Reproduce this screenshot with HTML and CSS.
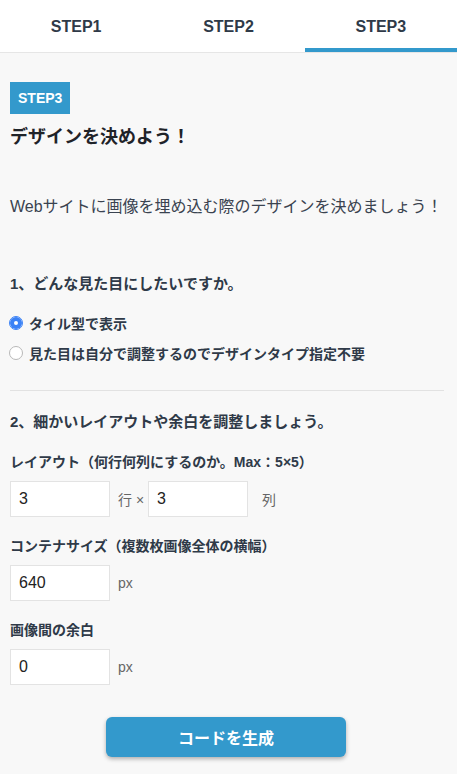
FILE: index.html
```html
<!DOCTYPE html>
<html lang="ja">
<head>
    <meta charset="utf-8">
    <title>画像埋め込みコード生成</title>
    <link rel="stylesheet" href="styles.css">
</head>
<body>
    <div class="tabs">
        <div class="tab">STEP1</div>
        <div class="tab">STEP2</div>
        <div class="tab active">STEP3</div>
    </div>

    <div class="content">
        <span class="badge">STEP3</span>
        <h1 class="title">デザインを決めよう！</h1>
        <p class="lead">Webサイトに画像を埋め込む際のデザインを決めましょう！</p>

        <h2 class="question q1">1、どんな見た目にしたいですか。</h2>
        <label class="radio first">
            <input type="radio" name="design" checked>
            <span>タイル型で表示</span>
        </label>
        <label class="radio">
            <input type="radio" name="design">
            <span>見た目は自分で調整するのでデザインタイプ指定不要</span>
        </label>

        <hr class="divider">

        <h2 class="question q2">2、細かいレイアウトや余白を調整しましょう。</h2>

        <div class="field">
            <div class="field-label">レイアウト（何行何列にするのか。Max：5×5）</div>
            <div class="field-row">
                <input type="text" class="num" value="3">
                <span class="unit">行 ×</span>
                <input type="text" class="num" value="3">
                <span class="unit wide">列</span>
            </div>
        </div>

        <div class="field">
            <div class="field-label">コンテナサイズ（複数枚画像全体の横幅）</div>
            <div class="field-row">
                <input type="text" class="num" value="640">
                <span class="unit">px</span>
            </div>
        </div>

        <div class="field">
            <div class="field-label">画像間の余白</div>
            <div class="field-row">
                <input type="text" class="num" value="0">
                <span class="unit">px</span>
            </div>
        </div>

        <div class="actions">
            <button class="generate">コードを生成</button>
        </div>
    </div>
</body>
</html>
```

FILE: styles.css
```css
body {
    margin: 0;
    background-color: #f8f8f8;
    font-family: "Liberation Sans", "Noto Sans CJK JP", sans-serif;
    color: #2f3a48;
}

.tabs {
    display: flex;
    background-color: #fff;
    border-bottom: 1px solid #e6e6e6;
}

.tab {
    flex: 1;
    height: 52px;
    line-height: 53px;
    text-align: center;
    font-size: 16px;
    font-weight: bold;
    color: #2f3a48;
}

.tab.active {
    box-shadow: inset 0 -4px 0 #3399cc;
}

.content {
    padding: 29px 10px 20px;
}

.badge {
    display: inline-block;
    height: 32px;
    line-height: 32px;
    padding: 0 8px;
    background-color: #3399cc;
    color: #fff;
    font-size: 14px;
    font-weight: bold;
}

.title {
    margin: 11px 0 0;
    font-size: 18px;
    line-height: 24px;
    color: #1f2329;
}

.lead {
    margin: 46px 0 0;
    font-size: 16px;
    line-height: 24px;
    color: #3a4350;
}

.question {
    margin: 0;
    font-size: 15px;
    line-height: 22px;
    font-weight: bold;
}

.q1 {
    margin-top: 54px;
}

.radio {
    display: flex;
    align-items: center;
    height: 20px;
    margin-top: 10px;
    font-size: 14px;
    font-weight: bold;
}

.radio.first {
    margin-top: 18px;
}

.radio input {
    appearance: none;
    -webkit-appearance: none;
    width: 14px;
    height: 14px;
    margin: 0 6px 0 -1px;
    border: 1px solid #b8b8b8;
    border-radius: 50%;
    background-color: #fff;
}

.radio input:checked {
    border-color: #3b82f6;
    box-shadow: inset 0 0 0 4px #3b82f6;
}

.divider {
    margin: 27px 3px 0 0;
    border: 0;
    border-top: 1px solid #e2e2e2;
}

.q2 {
    margin-top: 20px;
}

.field {
    margin-top: 19px;
}

.field-label {
    font-size: 14px;
    line-height: 20px;
    font-weight: bold;
}

.field-row {
    display: flex;
    align-items: center;
    margin-top: 9px;
}

.num {
    box-sizing: border-box;
    width: 100px;
    height: 36px;
    padding: 0 8px;
    border: 1px solid #e3e3e3;
    background-color: #fff;
    font-family: "Liberation Sans", sans-serif;
    font-size: 16px;
    color: #222;
}

.unit {
    margin: 0 4px 0 8px;
    font-size: 14px;
    color: #666;
}

.unit.wide {
    margin-left: 14px;
}

.actions {
    display: flex;
    justify-content: center;
    margin-top: 32px;
}

.generate {
    width: 240px;
    height: 40px;
    margin-right: 5px;
    border: 0;
    border-radius: 6px;
    background-color: #3399cc;
    box-shadow: 0 2px 4px rgba(0, 0, 0, 0.3);
    color: #fff;
    font-family: "Liberation Sans", "Noto Sans CJK JP", sans-serif;
    font-size: 16px;
    font-weight: bold;
    cursor: pointer;
}
```
